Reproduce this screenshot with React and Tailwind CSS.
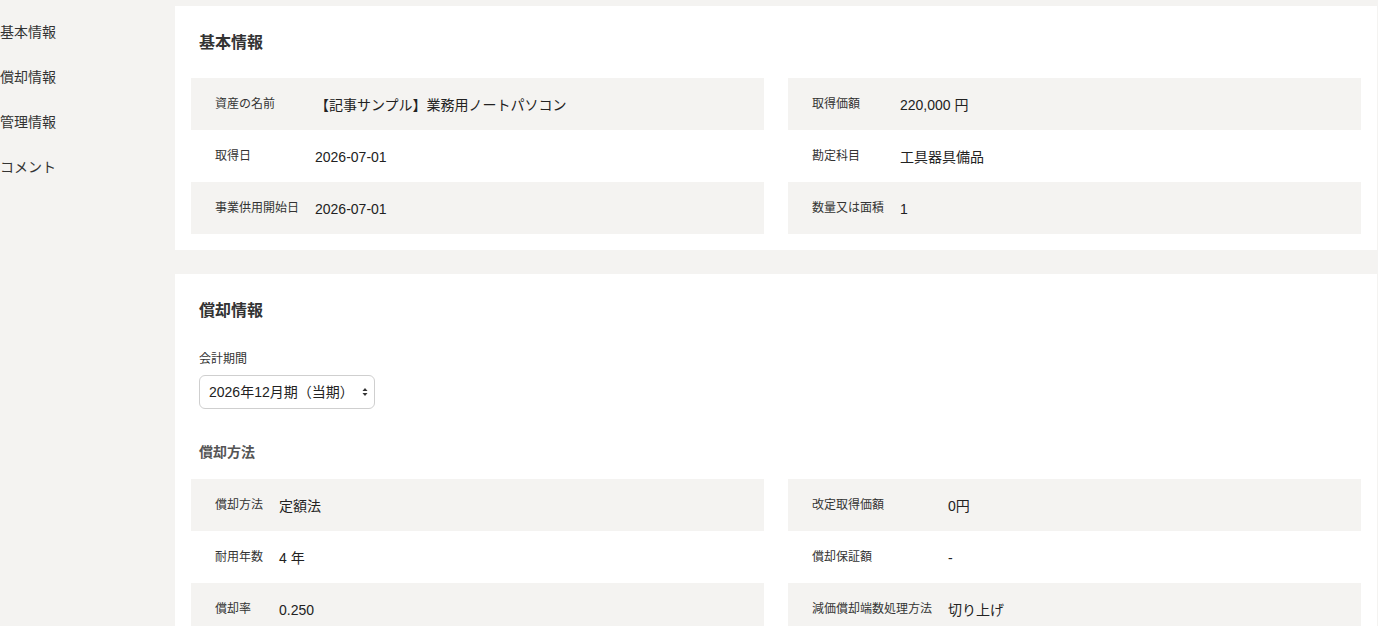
import React from "react";

const font = { fontFamily: '"Liberation Sans", "Noto Sans CJK JP", sans-serif' };

function InfoTable({ rows }) {
  return (
    <table className="w-full border-collapse">
      <tbody>
        {rows.map(([label, value], i) => (
          <tr key={i} className={i % 2 === 0 ? "bg-[#f4f3f1] h-[52px]" : "bg-white h-[52px]"}>
            <td className="pl-6 pr-4 w-px whitespace-nowrap text-[12px] leading-[18px] text-[#333] align-middle">
              <div className="-mt-[1px]">{label}</div>
            </td>
            <td className="pr-4 pt-[2px] text-[14px] leading-[20px] text-[#222] align-middle">{value}</td>
          </tr>
        ))}
      </tbody>
    </table>
  );
}

function TwoCol({ left, right }) {
  return (
    <div className="grid grid-cols-2 gap-6">
      <InfoTable rows={left} />
      <InfoTable rows={right} />
    </div>
  );
}

export default function App() {
  return (
    <div className="min-h-[626px] h-[626px] overflow-hidden bg-[#f4f3f1] flex text-[#333]" style={font}>
      <aside className="w-[175px] shrink-0 pt-[22px]">
        {["基本情報", "償却情報", "管理情報", "コメント"].map((t) => (
          <div key={t} className="h-[45px] text-[14px] leading-[20px] text-[#333]">
            {t}
          </div>
        ))}
      </aside>
      <main className="flex-1 pr-px pt-[6px] flex flex-col gap-6">
        <section className="bg-white px-4 pt-6 pb-4">
          <h2 className="px-2 text-[16px] leading-[26px] font-bold text-[#333] mb-[22px]">基本情報</h2>
          <TwoCol
            left={[
              ["資産の名前", "【記事サンプル】業務用ノートパソコン"],
              ["取得日", "2026-07-01"],
              ["事業供用開始日", "2026-07-01"],
            ]}
            right={[
              ["取得価額", "220,000 円"],
              ["勘定科目", "工具器具備品"],
              ["数量又は面積", "1"],
            ]}
          />
        </section>
        <section className="bg-white px-4 pt-6 pb-4">
          <h2 className="px-2 text-[16px] leading-[26px] font-bold text-[#333] mb-[26px]">償却情報</h2>
          <div className="px-2">
            <div className="text-[12px] leading-[18px] text-[#333] mb-[7px]">会計期間</div>
            <div className="w-[176px] h-[34px] border border-[#cfcfcf] rounded-[6px] flex items-center justify-between pl-[9px] pr-[6px] text-[14px] text-[#222] bg-white">
              <span className="pt-[1px]">2026年12月期（当期）</span>
              <svg width="6" height="10" viewBox="0 0 6 10" className="text-[#333]">
                <path d="M0.5 4 L3 1 L5.5 4 Z" fill="currentColor" />
                <path d="M0.5 6 L3 9 L5.5 6 Z" fill="currentColor" />
              </svg>
            </div>
            <h3 className="mt-[33px] mb-[17px] text-[14px] leading-[20px] font-bold text-[#555]">償却方法</h3>
          </div>
          <TwoCol
            left={[
              ["償却方法", "定額法"],
              ["耐用年数", "4 年"],
              ["償却率", "0.250"],
            ]}
            right={[
              ["改定取得価額", "0円"],
              ["償却保証額", "-"],
              ["減価償却端数処理方法", "切り上げ"],
            ]}
          />
        </section>
      </main>
    </div>
  );
}
